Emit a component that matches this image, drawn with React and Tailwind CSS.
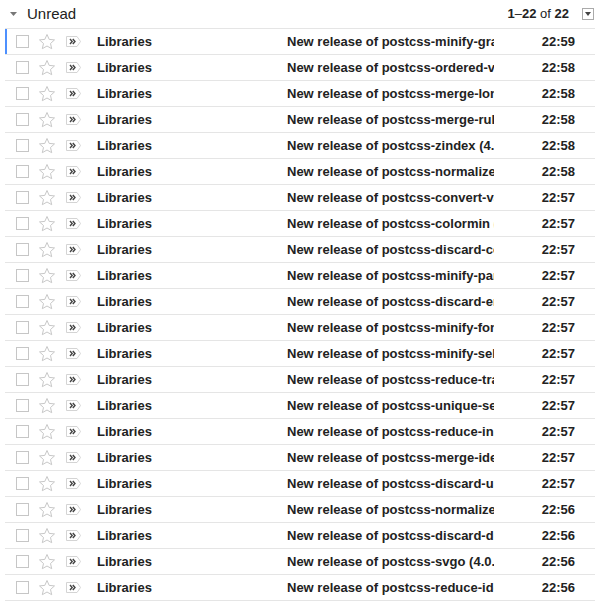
import React from 'react';

const rows = [
  ['postcss-minify-grad', '22:59'],
  ['postcss-ordered-va', '22:58'],
  ['postcss-merge-long', '22:58'],
  ['postcss-merge-rule', '22:58'],
  ['postcss-zindex (4.0', '22:58'],
  ['postcss-normalize-', '22:58'],
  ['postcss-convert-va', '22:57'],
  ['postcss-colormin (4', '22:57'],
  ['postcss-discard-co', '22:57'],
  ['postcss-minify-par', '22:57'],
  ['postcss-discard-em', '22:57'],
  ['postcss-minify-fon', '22:57'],
  ['postcss-minify-sel', '22:57'],
  ['postcss-reduce-tra', '22:57'],
  ['postcss-unique-sel', '22:57'],
  ['postcss-reduce-ini', '22:57'],
  ['postcss-merge-iden', '22:57'],
  ['postcss-discard-un', '22:57'],
  ['postcss-normalize-', '22:56'],
  ['postcss-discard-du', '22:56'],
  ['postcss-svgo (4.0.0', '22:56'],
  ['postcss-reduce-ide', '22:56'],
];

function Star() {
  return (
    <svg width="18" height="18" viewBox="0 0 18 18">
      <path
        d="M9 1.5l2.2 4.9 5.3.5-4 3.6 1.2 5.2L9 13l-4.7 2.7 1.2-5.2-4-3.6 5.3-.5z"
        fill="none"
        stroke="#c8c8c8"
        strokeWidth="1"
        strokeLinejoin="round"
      />
    </svg>
  );
}

// importance marker: tag outline with a double chevron
function Importance() {
  return (
    <svg width="15" height="11" viewBox="0 0 15 11">
      <path d="M0.5 0.5h10.5l3.5 5-3.5 5H0.5z" fill="#fff" stroke="#d4d4d4" />
      <path d="M4 3l2.2 2.5L4 8M6.8 3l2.2 2.5L6.8 8" fill="none" stroke="#444" strokeWidth="1.4" />
    </svg>
  );
}

function Row({ subject, time, focused }) {
  return (
    <div className="relative flex h-[26px] items-center border-b border-[#e5e5e5]">
      {focused && <div className="absolute left-0 top-0 bottom-0 w-[2px] bg-[#4d90fe]" />}
      <div className="ml-[11px] h-[13px] w-[13px] border border-[#c6c6c6] bg-white" />
      <div className="ml-[9px] flex w-[18px] items-center"><Star /></div>
      <div className="ml-[10px] flex w-[15px] items-center"><Importance /></div>
      <div className="ml-[16px] w-[190px] truncate text-[13px] font-bold text-[#222]">Libraries</div>
      <div className="w-[207px] overflow-hidden whitespace-nowrap text-[13px] font-bold text-[#222]">
        New release of {subject}
      </div>
      <div className="w-[81px] text-right text-[13px] font-bold text-[#222]">{time}</div>
    </div>
  );
}

export default function App() {
  return (
    <div className="h-[603px] w-[602px] bg-white" style={{ fontFamily: '"Liberation Sans", Arial, sans-serif' }}>
      <div className="flex h-[28px] items-center pl-[10px] pr-[8px]">
        <svg width="7" height="4" viewBox="0 0 7 4"><path d="M0 0h7L3.5 4z" fill="#777" /></svg>
        <span className="ml-[10px] text-[15px] text-[#222]">Unread</span>
        <div className="ml-auto text-[13px] text-[#222]">
          <b>1</b>–<b>22</b> of <b>22</b>
        </div>
        <div className="ml-[13px] flex h-[12px] w-[12px] items-center justify-center border border-[#aaa] bg-white">
          <svg width="6" height="4" viewBox="0 0 6 4"><path d="M0 0h6L3 4z" fill="#444" /></svg>
        </div>
      </div>
      <div className="ml-[5px] mr-[7px] border-t border-[#e5e5e5]">
        {rows.map(([s, t], i) => (
          <Row key={i} subject={s} time={t} focused={i === 0} />
        ))}
      </div>
    </div>
  );
}
